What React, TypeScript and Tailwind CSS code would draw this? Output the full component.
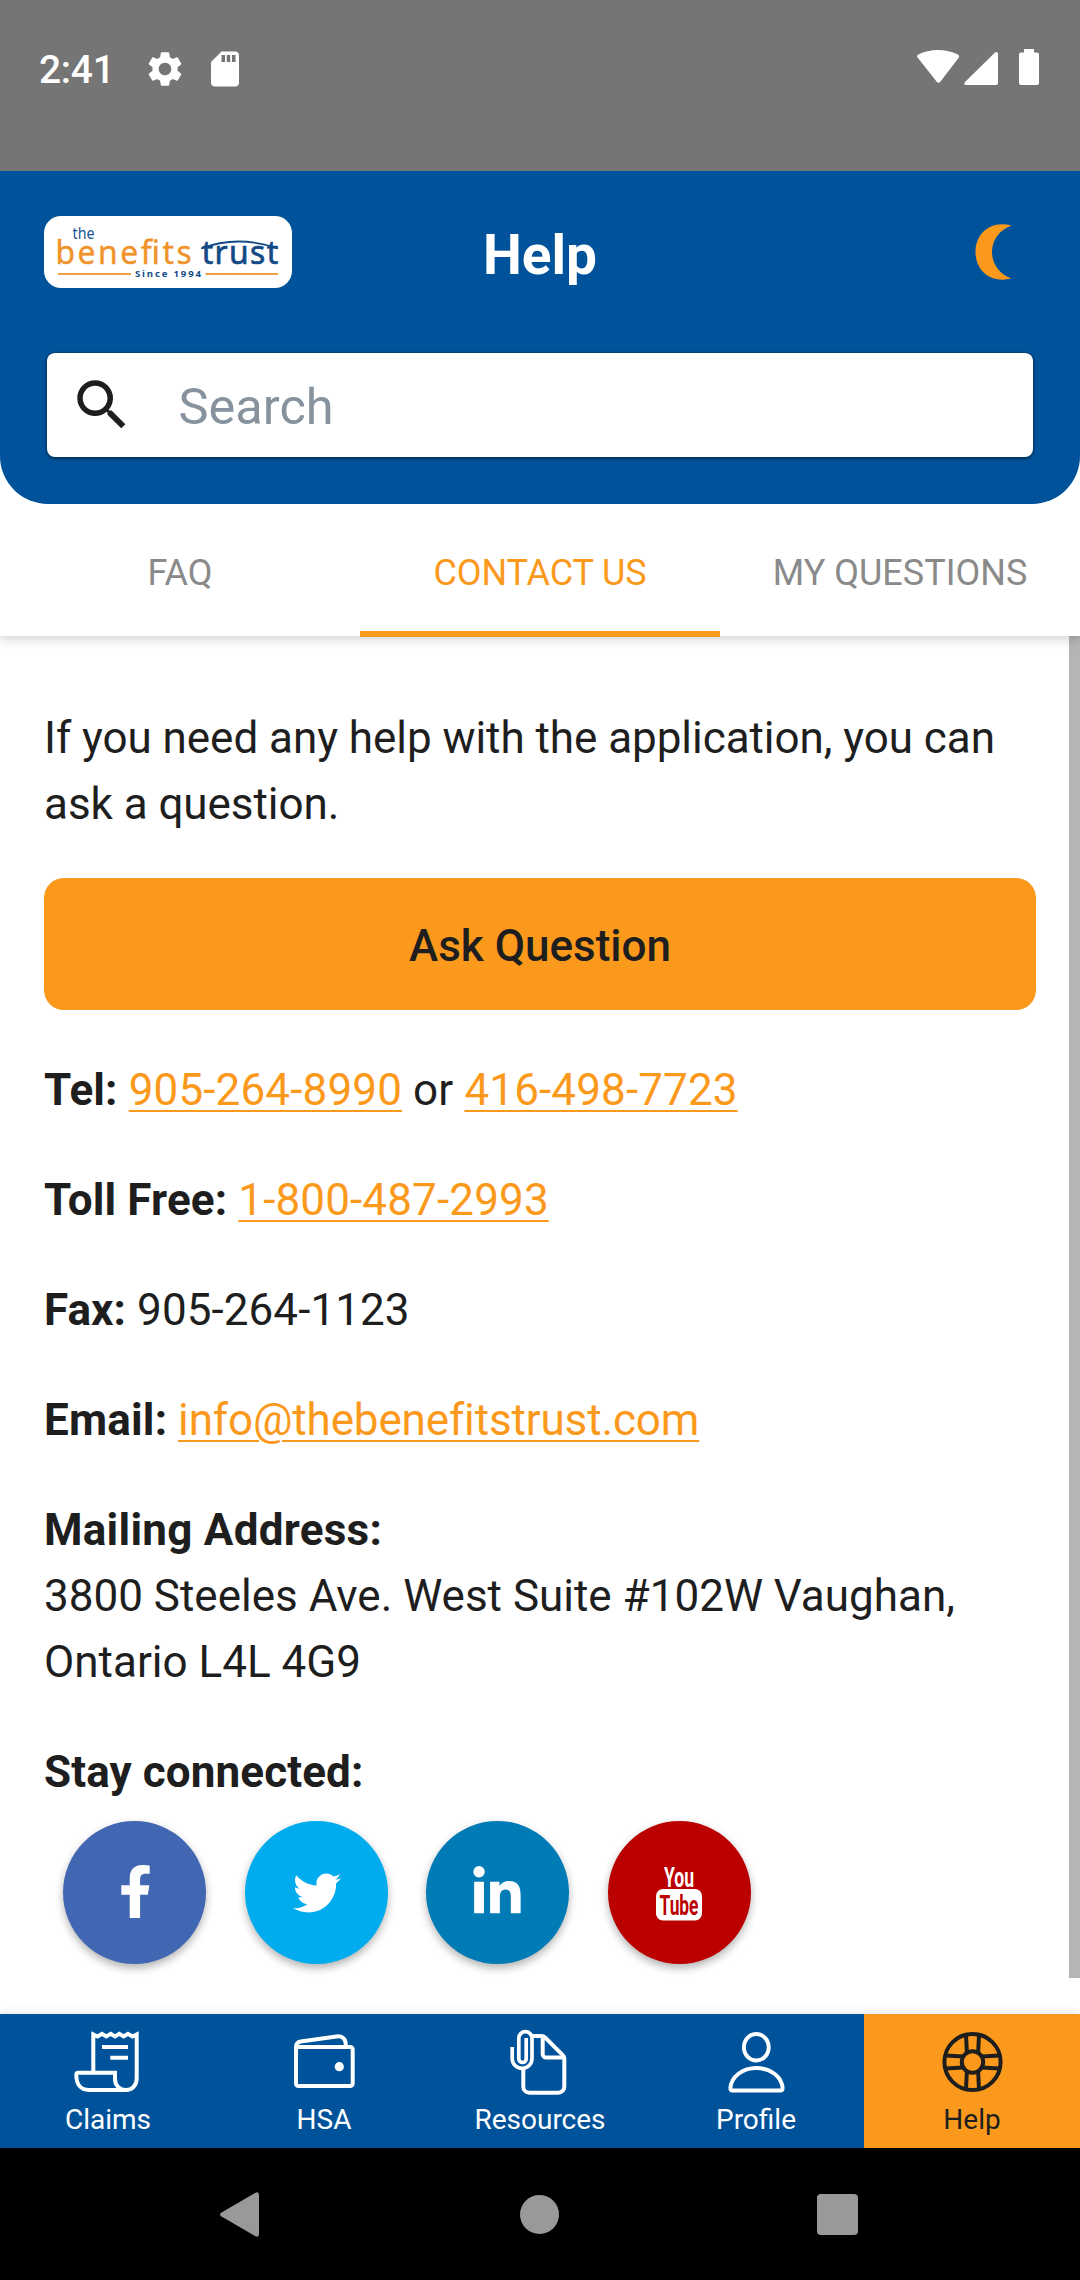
import type { ReactNode } from "react";
import { FaFacebookF, FaLinkedinIn, FaTwitter } from "react-icons/fa";
import { MdSdCard, MdSearch, MdSettings } from "react-icons/md";

type IconProps = { children: ReactNode };

function NavIcon({ children }: IconProps) {
  return (
    <svg
      className="block size-[68px]"
      viewBox="0 0 68 68"
      fill="none"
      stroke="currentColor"
      strokeWidth="4"
      strokeLinejoin="round"
    >
      {children}
    </svg>
  );
}

function ClaimsIcon() {
  return (
    <NavIcon>
      <path
        strokeLinejoin="miter"
        d="M19.3 44.7V6.5l4.300 2 4.400-2.600 4.300 2.600 4.400-2.600 4.300 2.600 4.300-2.600 4.400 2.600 4.300-2.600 4.400 2.600 4.300-2V50.500C62.700 57.500 58 62 52 62H15C6.500 62 2.300 56 2.300 46.700q0-2 2-2H41v6C41 57.500 45.500 62 52 62"
      />
      <path d="M28 19h26M36.300 29.700H54" />
    </NavIcon>
  );
}

function WalletIcon() {
  return (
    <NavIcon>
      <rect x="6" y="19" width="56.7" height="39" rx="2.5" />
      <path d="M6 23v-4c0-3 1.700-5 4.700-5.500L46.500 8.400c5.500-.8 9.200 2.600 9.200 7.600v3" />
      <circle cx="49.3" cy="38.7" r="4.6" fill="currentColor" stroke="none" />
    </NavIcon>
  );
}

function ResourcesIcon() {
  return (
    <NavIcon>
      <path d="M25.700 7.900h9.800c1.500 0 2.500.5 3.500 1.500l17.500 17.500c1.200 1.200 1.800 2 1.800 3.500v28.300a6 6 0 0 1-6 6h-29a6 6 0 0 1-6-6V40" />
      <path d="M36.700 8v18a3.600 3.600 0 0 0 3.600 3.600H58" />
      <path
        strokeWidth="3.7"
        d="M6.200 19v11.500a9.900 9.900 0 0 0 19.800 0V10.300a6.600 6.600 0 0 0-13.200 0v20.500a3.700 3.700 0 0 0 7.400 0V10"
      />
    </NavIcon>
  );
}

function ProfileIcon() {
  return (
    <NavIcon>
      <ellipse cx="34.3" cy="19.2" rx="12.4" ry="13.2" />
      <path d="M10.500 62.600h48a2.100 2.100 0 0 0 2.100-2.400C59.800 48.700 48.500 40 34.500 40S9.200 48.700 8.400 60.200a2.100 2.100 0 0 0 2.100 2.400z" />
    </NavIcon>
  );
}

function HelpIcon() {
  return (
    <NavIcon>
      <circle cx="34.5" cy="34" r="28.1" />
      <circle cx="34.5" cy="34" r="10.7" />
      <path d="M28 7l.9 18M41 7l-.9 18M28 61l.9-18M41 61l-.9-18M7.500 27.500l18 .9M7.500 40.500l18-.9M61.500 27.500l-18 .9M61.500 40.500l-18-.9" />
    </NavIcon>
  );
}

function Logo() {
  return (
    <svg
      className="block h-[72px] w-[248px] rounded-[17px] bg-white font-['Noto_Sans','Open_Sans',sans-serif]"
      viewBox="0 0 248 72"
    >
      <text x="28.5" y="22.5" fontSize="15.5" fill="#1d5591" textLength="22" lengthAdjust="spacingAndGlyphs">
        the
      </text>
      <g transform="scale(.95 1)" fontSize="33.5">
        <text x="12" y="48.5" fill="#f0932a" stroke="#f0932a" strokeWidth=".4" textLength="143.5" lengthAdjust="spacing">
          benefits
        </text>
        <text x="166" y="48.5" fill="#134a86" stroke="#134a86" strokeWidth=".7" textLength="80.5" lengthAdjust="spacing">
          trust
        </text>
      </g>
      <path d="M157 32.500Q194 18.500 234 32.500" fill="none" stroke="#134a86" strokeWidth="1.8" />
      <path d="M14 58h73M161.500 58H234" stroke="#f2a044" strokeWidth="2" />
      <text x="91" y="61" fontSize="9.6" fontWeight="700" fill="#134a86" textLength="66" lengthAdjust="spacing">
        Since 1994
      </text>
    </svg>
  );
}

function YoutubeIcon() {
  return (
    <svg className="block h-14 w-12 overflow-visible font-[Roboto,sans-serif]" viewBox="0 0 48 56" fontWeight="700">
      <text x="9" y="21.5" fontSize="28" fill="#fff" textLength="30" lengthAdjust="spacingAndGlyphs">
        You
      </text>
      <rect x="1" y="24" width="46" height="31.5" rx="7" fill="#fff" />
      <text x="4.5" y="49.5" fontSize="28" fill="#bb0000" textLength="39" lengthAdjust="spacingAndGlyphs">
        Tube
      </text>
    </svg>
  );
}

const tabs = ["FAQ", "CONTACT US", "MY QUESTIONS"];

const socials = [
  { name: "facebook", color: "bg-[#4267b2]", icon: <FaFacebookF className="mb-[3px] ml-px size-[53px]" /> },
  { name: "twitter", color: "bg-[#00aced]", icon: <FaTwitter className="ml-px size-[48px]" /> },
  { name: "linkedin", color: "bg-[#007bb6]", icon: <FaLinkedinIn className="mr-px size-[54px]" /> },
  { name: "youtube", color: "bg-[#bb0000]", icon: <YoutubeIcon /> },
];

const navItems = [
  { label: "Claims", icon: <ClaimsIcon /> },
  { label: "HSA", icon: <WalletIcon /> },
  { label: "Resources", icon: <ResourcesIcon /> },
  { label: "Profile", icon: <ProfileIcon /> },
  { label: "Help", icon: <HelpIcon /> },
];

function StatusBar() {
  return (
    <div className="flex h-[171px] shrink-0 items-start justify-between bg-[#757575] pt-[46px] pr-10 pl-[39px] text-white">
      <div className="flex items-center">
        <span className="w-[105px] pt-0.5 text-[39px] leading-[44px] font-medium tracking-[-0.3px]">2:41</span>
        <MdSettings className="size-[42px]" />
        <MdSdCard className="ml-[18px] size-[42px]" />
      </div>
      <svg className="h-[42px] w-[124px]" viewBox="0 0 124 42" fill="currentColor">
        <path d="M2 12Q0 10 2.200 8.500C14 2.500 30 2.500 42 8.500Q44 10 42.500 12L24.500 35.500Q22.500 38 20.500 35.500z" />
        <path d="M50 39q-3-.5-1-3L79 6.500q2-1.500 3 1V37q0 2-2 2z" />
        <path d="M108 3h10v3.500h3q2 0 2 2V37q0 2-2 2h-16q-2 0-2-2V8.500q0-2 2-2h3z" />
      </svg>
    </div>
  );
}

function Header() {
  return (
    <header className="h-[333px] shrink-0 rounded-b-[48px] bg-[#00539b] px-11 pt-[45px]">
      <div className="grid h-[72px] grid-cols-3 items-center">
        <Logo />
        <h1 className="pt-1.5 text-center text-[55px] leading-[64px] font-bold text-white">Help</h1>
        <svg className="mr-6 h-[56px] w-[37px] justify-self-end" viewBox="0 0 37 56" fill="#fa991c">
          <path d="M36.500 1.500C14-4 .5 11 .5 28S14 60 36.500 54.500C24 50 17 39.500 17 28S24 6 36.500 1.500z" />
        </svg>
      </div>
      <div className="mr-[3px] ml-[2.5px] mt-[64.5px] flex h-[104.5px] items-center rounded-[8px] bg-white pl-[22px] shadow-[0_1px_3px_1px_rgba(0,0,0,0.45)]">
        <MdSearch className="size-[66px] text-[#1e1e1e]" />
        <span className="pt-[5px] pl-[44px] text-[50.5px] leading-[60px] text-[#86939e]">Search</span>
      </div>
    </header>
  );
}

function Link({ text }: { text: string }) {
  return <a className="text-[#fa991c] underline decoration-[2px] underline-offset-[5px]">{text}</a>;
}

export default function App() {
  return (
    <div className="flex h-[2280px] w-[1080px] flex-col overflow-hidden bg-white font-[Roboto,sans-serif] text-[#1e1e1e]">
      <StatusBar />
      <Header />
      <div className="relative flex h-[132px] shrink-0 bg-white shadow-[0_2px_12px_rgba(0,0,0,0.22)] [clip-path:inset(0_0_-20px_0)]">
        {tabs.map((tab) => (
          <div
            key={tab}
            className={
              tab === "CONTACT US"
                ? "-mb-px flex flex-1 items-center justify-center border-b-[6px] border-[#fa991c] pt-2.5 text-[36px] tracking-[-0.1px] text-[#fa991c]"
                : "flex flex-1 items-center justify-center pt-1.5 text-[36px] text-[#8a8a8a]"
            }
          >
            {tab}
          </div>
        ))}
      </div>

      <main className="flex h-[1378px] shrink-0">
        <div className="flex-1 pt-[69px] pl-11 text-[44px] leading-[66px]">
          <p className="tracking-[-0.05px]">
            If you need any help with the application, you can
            <br />
            ask a question.
          </p>
          <button className="mt-[41px] flex h-[132px] w-[992px] items-center justify-center rounded-[20px] bg-[#fa991c] pt-1 font-medium">
            Ask Question
          </button>
          <p className="mt-[47px] tracking-[0.14px]">
            <b>Tel:</b> <Link text="905-264-8990" /> or <Link text="416-498-7723" />
          </p>
          <p className="mt-11 tracking-[0.14px]">
            <b>Toll Free:</b> <Link text="1-800-487-2993" />
          </p>
          <p className="mt-11 tracking-[0.08px]">
            <b>Fax:</b> 905-264-1123
          </p>
          <p className="mt-11 tracking-[-0.14px]">
            <b className="tracking-[0.2px]">Email:</b> <Link text="info@thebenefitstrust.com" />
          </p>
          <p className="mt-11">
            <b className="tracking-[0.26px]">Mailing Address:</b>
            <br />
            3800 Steeles Ave. West Suite #102W Vaughan,
            <br />
            Ontario L4L 4G9
          </p>
          <p className="mt-11">
            <b className="tracking-[0.1px]">Stay connected:</b>
          </p>
          <div className="mt-4 ml-[19px] flex gap-[38.5px]">
            {socials.map((s) => (
              <div
                key={s.name}
                className={`flex size-[143px] items-center justify-center rounded-full text-white shadow-[0_4px_8px_rgba(0,0,0,0.3)] ${s.color}`}
              >
                {s.icon}
              </div>
            ))}
          </div>
        </div>
        <div className="h-[1342px] w-[11px] bg-[#b5b5b5]" />
      </main>

      <nav className="relative flex h-[134px] shrink-0 shadow-[0_0_10px_rgba(0,0,0,0.12)]">
        {navItems.map((item) => (
          <div
            key={item.label}
            className={`flex flex-1 flex-col items-center pt-3.5 text-[28px] leading-[34px] ${
              item.label === "Help" ? "bg-[#fa991c] text-[#1e1e1e]" : "bg-[#00539b] text-white"
            }`}
          >
            {item.icon}
            <span className="mt-[7px]">{item.label}</span>
          </div>
        ))}
      </nav>

      <div className="flex flex-1 items-center justify-between bg-black pr-[222px] pl-[220px] text-[#999]">
        <svg className="h-[45px] w-[39px]" viewBox="0 0 39 45" fill="currentColor">
          <path d="M1.500 20.500L35 1q4-2 4 2v39q0 4-4 2L1.500 24.500q-3-2 0-4z" />
        </svg>
        <div className="ml-[3px] size-[39px] rounded-full bg-[#999]" />
        <div className="size-[41px] rounded-[4px] bg-[#999]" />
      </div>
    </div>
  );
}
